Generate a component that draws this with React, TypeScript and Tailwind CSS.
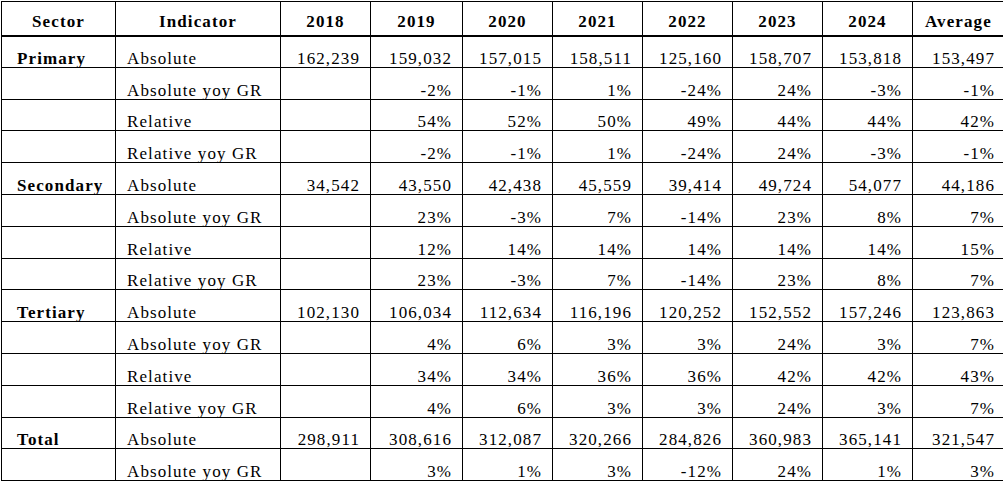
const years = ["2018", "2019", "2020", "2021", "2022", "2023", "2024", "Average"];

type Row = { sector?: string; indicator: string; values: string[] };

const rows: Row[] = [
  { sector: "Primary", indicator: "Absolute", values: ["162,239", "159,032", "157,015", "158,511", "125,160", "158,707", "153,818", "153,497"] },
  { indicator: "Absolute yoy GR", values: ["", "-2%", "-1%", "1%", "-24%", "24%", "-3%", "-1%"] },
  { indicator: "Relative", values: ["", "54%", "52%", "50%", "49%", "44%", "44%", "42%"] },
  { indicator: "Relative yoy GR", values: ["", "-2%", "-1%", "1%", "-24%", "24%", "-3%", "-1%"] },
  { sector: "Secondary", indicator: "Absolute", values: ["34,542", "43,550", "42,438", "45,559", "39,414", "49,724", "54,077", "44,186"] },
  { indicator: "Absolute yoy GR", values: ["", "23%", "-3%", "7%", "-14%", "23%", "8%", "7%"] },
  { indicator: "Relative", values: ["", "12%", "14%", "14%", "14%", "14%", "14%", "15%"] },
  { indicator: "Relative yoy GR", values: ["", "23%", "-3%", "7%", "-14%", "23%", "8%", "7%"] },
  { sector: "Tertiary", indicator: "Absolute", values: ["102,130", "106,034", "112,634", "116,196", "120,252", "152,552", "157,246", "123,863"] },
  { indicator: "Absolute yoy GR", values: ["", "4%", "6%", "3%", "3%", "24%", "3%", "7%"] },
  { indicator: "Relative", values: ["", "34%", "34%", "36%", "36%", "42%", "42%", "43%"] },
  { indicator: "Relative yoy GR", values: ["", "4%", "6%", "3%", "3%", "24%", "3%", "7%"] },
  { sector: "Total", indicator: "Absolute", values: ["298,911", "308,616", "312,087", "320,266", "284,826", "360,983", "365,141", "321,547"] },
  { indicator: "Absolute yoy GR", values: ["", "3%", "1%", "3%", "-12%", "24%", "1%", "3%"] },
];

export default function App() {
  return (
    <div className="w-[1003px] h-[486px] overflow-hidden bg-white pl-[1px] pt-[1px]">
      <table
        className="table-fixed border-collapse w-[1011px] text-black text-[17px] tracking-[1.1px]"
        style={{ fontFamily: '"Liberation Serif", "Times New Roman", serif' }}
      >
        <colgroup>
          <col className="w-[114px]" />
          <col className="w-[165px]" />
          <col className="w-[90px]" />
          <col className="w-[92px]" />
          <col className="w-[90px]" />
          <col className="w-[90px]" />
          <col className="w-[90px]" />
          <col className="w-[90px]" />
          <col className="w-[90px]" />
          <col className="w-[100px]" />
        </colgroup>
        <thead>
          <tr className="h-[34px]">
            <th className="border border-black border-b-2 font-bold text-center align-middle pt-[7px] leading-none">Sector</th>
            <th className="border border-black border-b-2 font-bold text-center align-middle pt-[7px] leading-none">Indicator</th>
            {years.map((y) => (
              <th
                key={y}
                className={`border border-black border-b-2 font-bold align-middle pt-[7px] leading-none ${
                  y === "Average" ? "text-left pl-[12px]" : "text-center"
                }`}
              >
                {y}
              </th>
            ))}
          </tr>
        </thead>
        <tbody>
          {rows.map((r, i) => (
            <tr key={i} className="h-[31.8px]">
              <td className="border border-black align-bottom pl-[15px] pb-0 font-bold leading-none">{r.sector ?? ""}</td>
              <td className="border border-black align-bottom pl-[11px] pb-0 leading-none whitespace-nowrap">{r.indicator}</td>
              {r.values.map((v, j) => (
                <td
                  key={j}
                  className={`border border-black align-bottom pb-0 leading-none text-right ${
                    j === 7 ? "pr-[17px]" : "pr-[10px]"
                  }`}
                >
                  {v}
                </td>
              ))}
            </tr>
          ))}
        </tbody>
      </table>
    </div>
  );
}
